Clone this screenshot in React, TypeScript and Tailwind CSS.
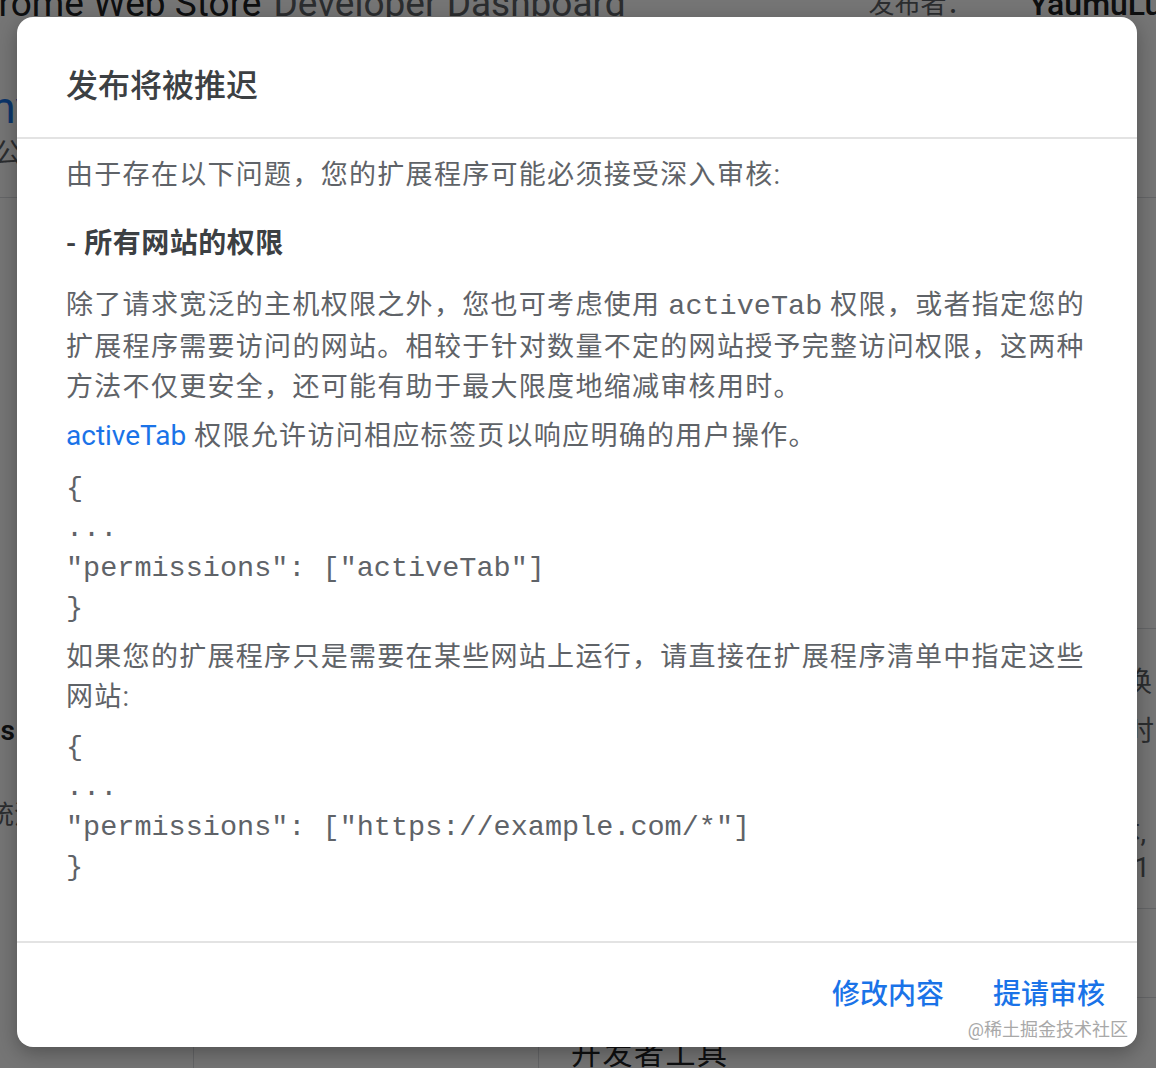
/**
 * "发布将被推迟" dialog from the Chrome Web Store developer dashboard,
 * shown over the (dimmed) dashboard page.
 */

const ACTIVE_TAB_CODE = ["{", "...", '"permissions": ["activeTab"]', "}"];
const HOSTS_CODE = ["{", "...", '"permissions": ["https://example.com/*"]', "}"];

export default function App() {
  return (
    <div className="relative h-[1068px] w-[1156px] overflow-hidden bg-white font-[Roboto,'Noto_Sans_CJK_SC',sans-serif]">
      <DashboardBehind />
      {/* scrim */}
      <div className="absolute inset-0 bg-black/[0.54]" />
      <DelayDialog />
    </div>
  );
}

function DashboardBehind() {
  return (
    <div className="flex h-full flex-col">
      <header className="h-[198px] shrink-0 border-b border-[#dadce0]">
        <div className="-mt-[16px] flex h-[40px] items-center whitespace-nowrap leading-[40px]">
          <span className="-ml-[46px] text-[37px] text-[#202124]">Chrome Web Store</span>
          <span className="ml-[12px] text-[37px] text-[#5f6368]">Developer Dashboard</span>
          <span className="ml-[243px] text-[26px] text-[#5f6368]">发布者：</span>
          <span className="ml-[56px] text-[32px] font-medium text-[#202124]">YaumuLu</span>
        </div>
        <div className="-ml-[23px] mt-[58px] whitespace-nowrap text-[44px] leading-[52px] text-[#1a73e8]">
          my extension
        </div>
        <div className="-ml-[6px] whitespace-nowrap text-[28px] leading-[40px] text-[#5f6368]">
          公开
        </div>
      </header>

      <div className="flex flex-1">
        <aside className="w-[194px] shrink-0 border-r border-[#dadce0]">
          <div className="mt-[513px] flex w-[15px] justify-end text-[28px] font-semibold leading-[40px] text-[#202124]">
            <span className="whitespace-nowrap">统计 Items</span>
          </div>
          <div className="-ml-[12px] mt-[44px] whitespace-nowrap text-[26px] leading-[40px] text-[#5f6368]">
            统流量
          </div>
        </aside>

        <div className="w-[345px] shrink-0 border-r border-[#dadce0]" />

        <section className="flex flex-1 flex-col whitespace-nowrap text-[28px] text-[#5f6368]">
          <div className="h-[431px] shrink-0 border-b border-[#dadce0]" />
          <div className="h-[280px] shrink-0 border-b border-[#dadce0] pt-[34px]">
            <div className="flex justify-end pr-[4px] leading-[40px]">可随时切换</div>
            <div className="mt-[9px] flex justify-end pr-[2px] leading-[40px]">如有所需时</div>
            <div className="mt-[63px] flex justify-end pr-[10px] leading-[35px]">当前版本,</div>
            <div className="flex justify-end pr-[6px] leading-[35px]">2.71</div>
          </div>
          <div className="h-[89px] shrink-0 border-b border-[#dadce0]" />
          <div className="pl-[32px] pt-[36px] text-[30px] leading-[40px] tracking-[1.5px] text-[#202124]">
            开发者工具
          </div>
        </section>
      </div>
    </div>
  );
}

function DelayDialog() {
  return (
    <div className="absolute left-[17px] top-[17px] flex h-[1030px] w-[1120px] flex-col overflow-hidden rounded-[16px] bg-white shadow-[0_6px_20px_rgba(0,0,0,0.3)]">
      <div className="h-[122px] shrink-0 border-b-2 border-[#e3e3e3] pl-[49px] pt-[49px]">
        <h2 className="text-[32px] font-medium leading-[40px] text-[#3c4043]">发布将被推迟</h2>
      </div>

      <div className="flex-1 pl-[49px] pr-[30px] pt-[16px] text-[27px] leading-[40px] tracking-[1.3px] text-[#5f6368]">
        <p className="whitespace-nowrap">由于存在以下问题，您的扩展程序可能必须接受深入审核:</p>

        <p className="mt-[29px] whitespace-nowrap text-[28px] font-semibold tracking-[0.5px] text-[#3c4043]">
          - 所有网站的权限
        </p>

        <p className="mt-[21px] whitespace-nowrap">
          除了请求宽泛的主机权限之外，您也可考虑使用{" "}
          <code className="font-['Liberation_Mono',monospace] text-[28.5px] tracking-normal">activeTab</code>{" "}
          权限，或者指定您的
          <br />
          扩展程序需要访问的网站。相较于针对数量不定的网站授予完整访问权限，这两种
          <br />
          方法不仅更安全，还可能有助于最大限度地缩减审核用时。
        </p>

        <p className="mt-[9px] whitespace-nowrap">
          <a className="text-[28px] tracking-normal text-[#1a73e8]">activeTab</a> 权限允许访问相应标签页以响应明确的用户操作。
        </p>

        <CodeBlock lines={ACTIVE_TAB_CODE} className="mt-[13px]" />

        <p className="mt-[8px] whitespace-nowrap">
          如果您的扩展程序只是需要在某些网站上运行，请直接在扩展程序清单中指定这些
          <br />
          网站:
        </p>

        <CodeBlock lines={HOSTS_CODE} className="mt-[11px]" />
      </div>

      <div className="relative flex h-[106px] shrink-0 items-center justify-end gap-[49px] border-t-2 border-[#e3e3e3] pr-[32px]">
        <button type="button" className="text-[28px] font-medium leading-[40px] text-[#1a73e8]">
          修改内容
        </button>
        <button type="button" className="text-[28px] font-medium leading-[40px] text-[#1a73e8]">
          提请审核
        </button>
        <span className="absolute bottom-[5px] right-[9px] text-[18px] leading-[24px] text-[#a8a8a8]">
          @稀土掘金技术社区
        </span>
      </div>
    </div>
  );
}

function CodeBlock({ lines, className }: { lines: string[]; className?: string }) {
  return (
    <pre
      className={`${className ?? ""} font-['Liberation_Mono',monospace] text-[28.5px] leading-[40px] tracking-normal text-[#5f6368]`}
    >
      {lines.map((line, i) => (
        <div key={i}>{line}</div>
      ))}
    </pre>
  );
}
